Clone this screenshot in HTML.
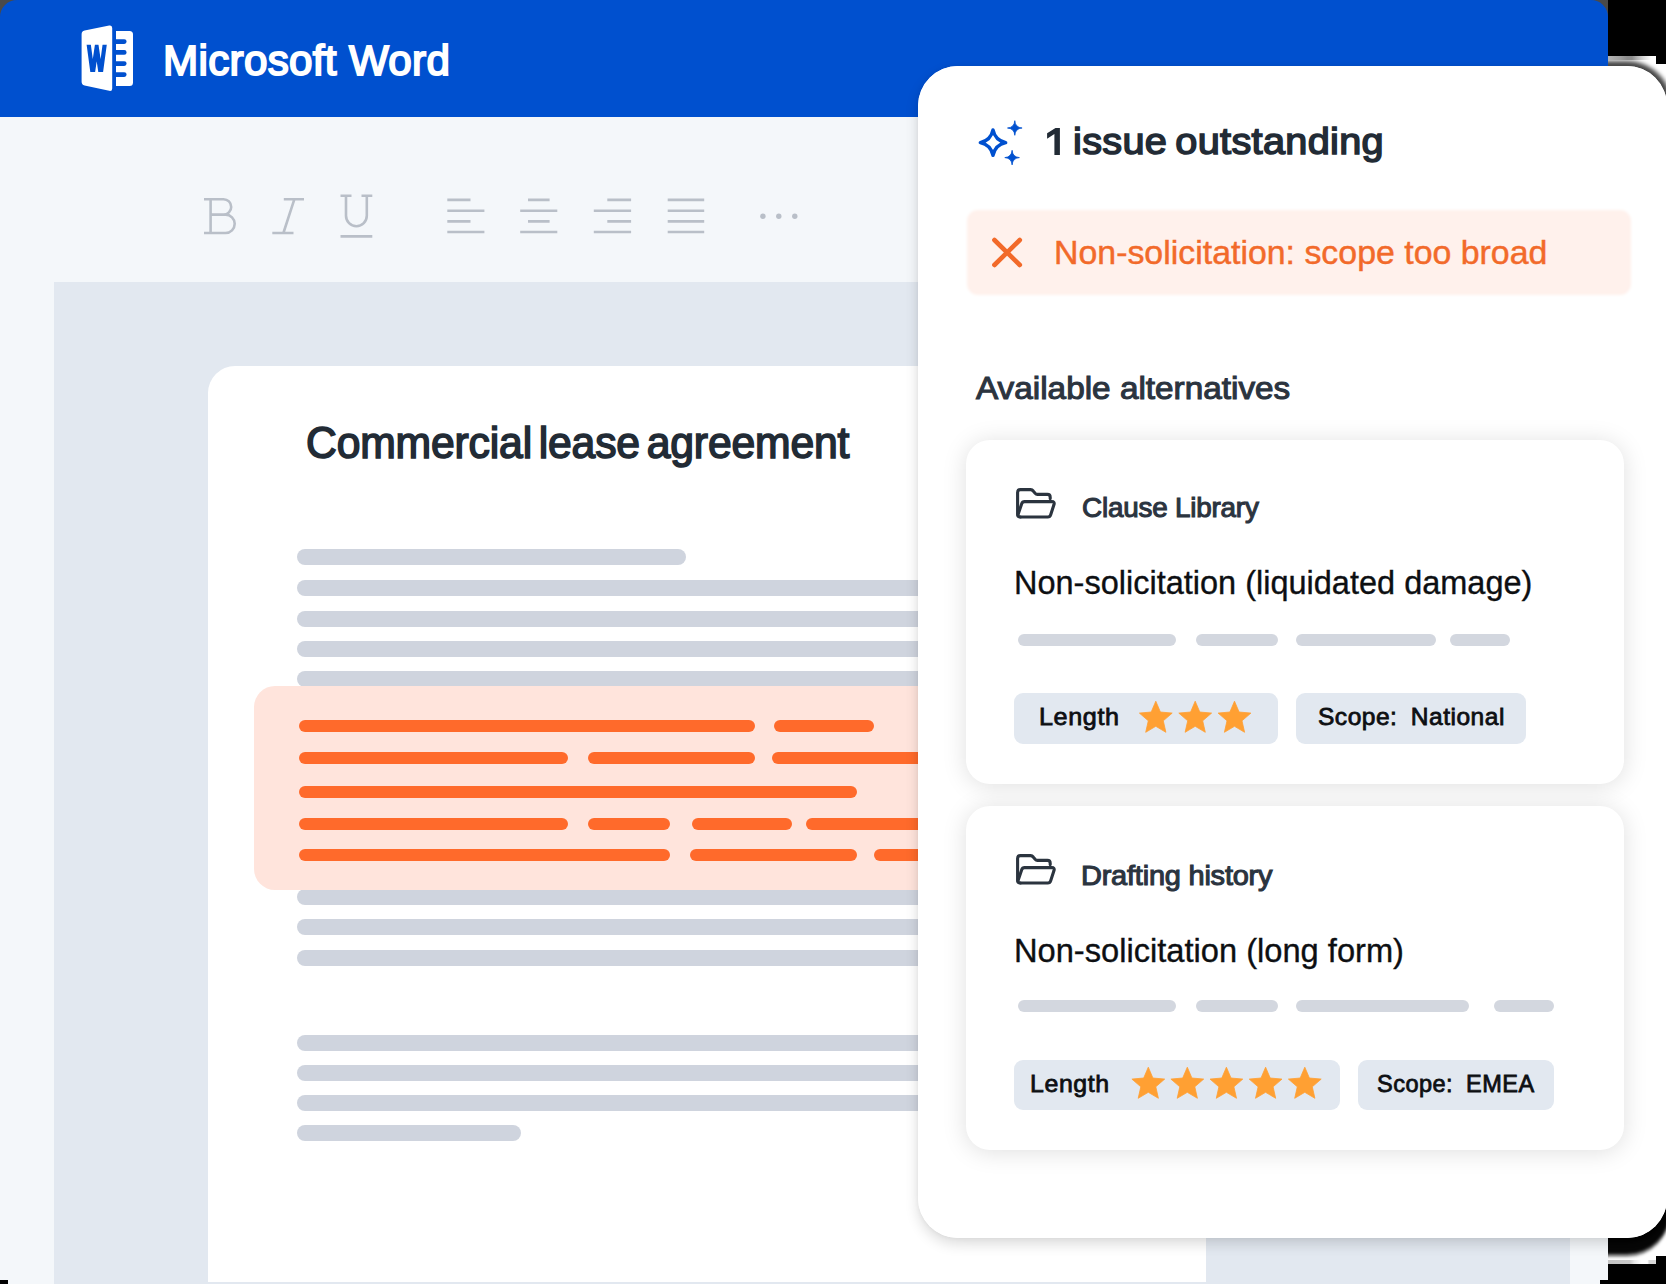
<!DOCTYPE html>
<html>
<head>
<meta charset="utf-8">
<title>Microsoft Word – clause review</title>
<style>
*{box-sizing:border-box;margin:0;padding:0}
html,body{width:1666px;height:1284px;overflow:hidden}
body{position:relative;background:#f4f7fa;font-family:"Liberation Sans",sans-serif;color:#1f2933}
.abs{position:absolute}
.t{position:absolute;white-space:nowrap;line-height:1;transform-origin:0 0}
/* window chrome */
#cornerL{left:0;top:0;width:24px;height:24px;background:#4a4a4a}
#cornerR{left:1584px;top:0;width:24px;height:24px;background:#4a4a4a}
#hdr{left:0;top:0;width:1608px;height:117px;background:#0050cf;border-radius:17px 17px 0 0}
#grayarea{left:54px;top:282px;width:1516px;height:1002px;background:#e2e8f0}
#doc{left:208px;top:366px;width:998px;height:916px;background:#fff;border-radius:27px 27px 0 0}
.gl{position:absolute;height:16px;border-radius:8px;background:#cfd4de;left:297px}
#hl{left:254px;top:686px;width:900px;height:204px;background:#ffe4dc;border-radius:21px 0 0 21px}
.ol{position:absolute;height:12px;border-radius:6px;background:#ff6a2b}
/* right strip (transparent-bg artefacts) */
#strip{left:1608px;top:0;width:58px;height:1284px;background:#fff;overflow:hidden}
/* panel */
#panel,#panelsh,#panelclone{left:918px;top:66px;width:749px;height:1172px;background:#fff;border-radius:40px}
#panelsh{box-shadow:0 6px 14px rgba(0,0,0,.14),0 0 5px rgba(0,0,0,.05)}
#panelclone{left:-690px;box-shadow:0 0 4px 5px rgba(0,0,0,.72),0 13px 3px 3px rgba(0,0,0,.96),0 16px 3px 3px rgba(0,0,0,.45)}
#strip i{position:absolute;display:block}
#alert{left:969px;top:212px;width:660px;height:81px;background:#fff1ec;border-radius:9px;box-shadow:0 0 3px 2px #fff1ec}
.card{position:absolute;left:966px;width:658px;height:344px;background:#fff;border-radius:24px;box-shadow:0 2px 24px rgba(0,0,0,.13)}
.pill{position:absolute;height:12px;border-radius:6px;background:#d3d7df}
.tag{position:absolute;height:51px;margin-top:-1px;border-radius:9px;background:#e2e8f0}
</style>
</head>
<body>
<!-- WINDOW -->
<div class="abs" id="cornerL"></div>
<div class="abs" id="cornerR"></div>
<div class="abs" id="hdr"></div>
<div class="abs" id="grayarea"></div>
<div class="abs" style="left:1570px;top:282px;width:38px;height:1002px;background:#f4f7fa"></div>
<div class="abs" id="doc"></div>

<!-- document content -->
<div class="t" id="doctitle" style="left:306.03px;top:420.85px;font-size:44px;color:#222b35;letter-spacing:-0.2px;word-spacing:-5px;transform:scaleX(0.9709);-webkit-text-stroke:1.6px #222b35">Commercial lease agreement</div>
<div class="gl" style="top:549px;width:389px"></div>
<div class="gl" style="top:580px;width:700px"></div>
<div class="gl" style="top:611px;width:700px"></div>
<div class="gl" style="top:641px;width:700px"></div>
<div class="gl" style="top:671px;width:700px"></div>
<div class="gl" style="top:889px;width:700px"></div>
<div class="gl" style="top:919px;width:700px"></div>
<div class="gl" style="top:950px;width:700px"></div>
<div class="gl" style="top:1035px;width:700px"></div>
<div class="gl" style="top:1065px;width:700px"></div>
<div class="gl" style="top:1095px;width:700px"></div>
<div class="gl" style="top:1125px;width:224px"></div>
<div class="abs" id="hl"></div>
<div class="ol" style="top:720px;left:299px;width:456px"></div>
<div class="ol" style="top:720px;left:774px;width:100px"></div>
<div class="ol" style="top:752px;left:299px;width:269px"></div>
<div class="ol" style="top:752px;left:588px;width:167px"></div>
<div class="ol" style="top:752px;left:772px;width:300px"></div>
<div class="ol" style="top:786px;left:299px;width:558px"></div>
<div class="ol" style="top:818px;left:299px;width:269px"></div>
<div class="ol" style="top:818px;left:588px;width:82px"></div>
<div class="ol" style="top:818px;left:692px;width:100px"></div>
<div class="ol" style="top:818px;left:806px;width:300px"></div>
<div class="ol" style="top:849px;left:299px;width:371px"></div>
<div class="ol" style="top:849px;left:690px;width:167px"></div>
<div class="ol" style="top:849px;left:874px;width:300px"></div>


<!-- header content -->
<svg class="abs" style="left:78px;top:22px" width="60" height="74" viewBox="78 22 60 74">
  <path d="M114 31 L129.5 31 Q133 31 133 34.5 L133 82.4 Q133 85.9 129.5 85.9 L114 85.9 Z" fill="#fff"/>
  <path d="M112 41.6 H124.2 M112 52.4 H124.2 M112 63.6 H124.2 M112 74.6 H124.2" stroke="#0050cf" stroke-width="4.8" stroke-linecap="round"/>
  <rect x="110" y="29" width="6" height="59" fill="#0050cf"/>
  <path d="M84.6 30.6 L109.2 25.6 Q112.2 25 112.2 28 L112.2 88.4 Q112.2 91.4 109.2 90.8 L84.6 85.4 Q81.6 84.8 81.6 81.8 L81.6 34.2 Q81.6 31.2 84.6 30.6 Z" fill="#fff"/>
  <svg x="80" y="44.8" width="32" height="27.2" viewBox="80 44.8 32 27.2"><path d="M88.5 43 L92.7 74 L96.7 47 L100.7 74 L104.9 43" fill="none" stroke="#0050cf" stroke-width="4.2" stroke-linejoin="miter" stroke-miterlimit="10"/></svg>
</svg>
<div class="t" id="apptitle" style="left:163.03px;top:38.65px;font-size:43px;color:#fff;letter-spacing:0.3px;word-spacing:0px;transform:scaleX(0.9817);-webkit-text-stroke:1.9px #fff">Microsoft Word</div>


<!-- toolbar -->
<svg class="abs" style="left:190px;top:185px" width="640" height="62" viewBox="190 185 640 62" fill="none" stroke="#b9bfc8" stroke-width="2.6">
  <!-- B -->
  <path d="M204 199.2 H223.5 A7.7 7.7 0 0 1 223.5 214.6 H211 M211 214.6 H225.5 A9.2 9.2 0 0 1 225.5 233 H204 M210.6 199.2 V233"/>
  <!-- I -->
  <path d="M283.8 199.2 H304 M272.3 233 H293.5 M294.4 199.2 L283.4 233"/>
  <!-- U -->
  <path d="M340.5 195.8 H351.5 M361.5 195.8 H372.3 M346 195.8 V215.8 A10.4 10.4 0 0 0 366.8 215.8 V195.8 M340.5 236.4 H372.3"/>
  <!-- align left -->
  <path d="M447.3 199.9 H470.5 M447.3 210.7 H484.4 M447.3 221.4 H470.5 M447.3 232 H484.4"/>
  <!-- center -->
  <path d="M528 199.9 H549.6 M520.2 210.7 H557.3 M528 221.4 H549.6 M520.2 232 H557.3"/>
  <!-- right -->
  <path d="M607.3 199.9 H631.1 M593.8 210.7 H631.1 M607.3 221.4 H631.1 M593.8 232 H631.1"/>
  <!-- justify -->
  <path d="M667.7 199.9 H704.2 M667.7 210.7 H704.2 M667.7 221.4 H704.2 M667.7 232 H704.2"/>
  <g fill="#b9bfc8" stroke="none"><circle cx="762.9" cy="216.2" r="2.7"/><circle cx="778.8" cy="216.2" r="2.7"/><circle cx="794.8" cy="216.2" r="2.7"/></g>
</svg>

<div class="abs" id="panelsh"></div>
<div class="abs" id="strip">
  <div class="abs" id="panelclone"></div>
  <i style="left:0;top:0;width:58px;height:56px;background:#000"></i>
  <i style="left:48px;top:56px;width:10px;height:8px;background:#000"></i>
  <i style="left:0;top:56px;width:48px;height:4px;background:linear-gradient(90deg,#b4b4b4 0,#a0a0a0 25%,#8c8c8c 40%,#8c8c8c 50%,#b0b0b0 60%,#dcdcdc 75%,#fff 90%)"></i>
  <i style="left:0;top:1260px;width:48px;height:4px;background:linear-gradient(90deg,#c4c4c4 0,#c8c8c8 45%,#e8e8e8 55%,#fff 70%,#fff 82%,#d8d8d8 86%,#d8d8d8 100%)"></i>
  <i style="left:0;top:1264px;width:58px;height:20px;background:#000"></i>
  <i style="left:48px;top:1256px;width:10px;height:8px;background:#000"></i>
</div>
<div class="abs" style="left:1600px;top:1280px;width:8px;height:4px;background:#000"></div>
<div class="abs" style="left:0;top:1280px;width:8px;height:4px;background:#000"></div>

<div class="abs" id="panel"></div>

<!-- panel content -->
<svg class="abs" style="left:970px;top:114px" width="60" height="58" viewBox="970 114 60 58">
  <path d="M993 129.9 Q995.159 140.441 1005.7 142.6 Q995.159 144.759 993 155.29999999999998 Q990.841 144.759 980.3 142.6 Q990.841 140.441 993 129.9Z" fill="none" stroke="#0050cf" stroke-width="3.4" stroke-linejoin="round"/>
  <path d="M1014.8 120.7 Q1015.3109999999999 127.489 1022.0999999999999 128 Q1015.3109999999999 128.511 1014.8 135.3 Q1014.289 128.511 1007.5 128 Q1014.289 127.489 1014.8 120.7Z" fill="#0050cf" stroke="#0050cf" stroke-width="0.8" stroke-linejoin="round"/>
  <path d="M1012.1 150.29999999999998 Q1012.611 157.089 1019.4 157.6 Q1012.611 158.111 1012.1 164.9 Q1011.589 158.111 1004.8000000000001 157.6 Q1011.589 157.089 1012.1 150.29999999999998Z" fill="#0050cf" stroke="#0050cf" stroke-width="0.8" stroke-linejoin="round"/>
</svg>
<svg class="abs" style="left:1044px;top:124px" width="20" height="34" viewBox="1044 124 20 34"><path d="M1059.9 128 V155.1 H1054.4 V134.1 L1047.1 138.7 V133.3 L1055.5 128 Z" fill="#222b35"/></svg>
<div class="t" id="h1" style="left:1072.55px;top:123.2px;font-size:37px;color:#222b35;letter-spacing:0.3px;word-spacing:-3px;transform:scaleX(1.0719);-webkit-text-stroke:1.5px #222b35">issue outstanding</div>
<div class="abs" id="alert"></div>
<svg class="abs" style="left:986px;top:232px" width="42" height="42" viewBox="986 232 42 42"><path d="M994.4 240 L1019.8 265 M1019.8 240 L994.4 265" stroke="#f26a2a" stroke-width="4.6" stroke-linecap="round"/></svg>
<div class="t" id="alerttxt" style="left:1053.96px;top:236.0px;font-size:33.2px;color:#f26a2a;letter-spacing:0px;word-spacing:0px;transform:scaleX(1.0208);-webkit-text-stroke:0.45px #f26a2a">Non-solicitation: scope too broad</div>
<div class="t" id="avail" style="left:976.06px;top:371.9px;font-size:32px;color:#2b343f;letter-spacing:0px;word-spacing:0px;transform:scaleX(1.0413);-webkit-text-stroke:1.1px #2b343f">Available alternatives</div>
<div class="card" style="top:440px"></div>
<svg class="abs" style="left:1010px;top:482px" width="54" height="44" viewBox="1010 482 54 44" fill="none" stroke="#2b343f" stroke-width="3.1" stroke-linejoin="round" stroke-linecap="round">
  <path d="M1050.2 498.6 V497.2 Q1050.2 494.4 1047.4 494.4 H1037.4 Q1036 494.4 1035.2 493.4 L1033.2 491 Q1032.2 489.6 1030.6 489.6 H1020.4 Q1017.6 489.6 1017.6 492.4 V514.2 Q1017.6 517 1020.4 517"/>
  <path d="M1020.4 517 H1047.8 Q1050 517 1050.6 514.9 L1054 504.6 Q1054.9 501.6 1051.8 501.6 H1024.6 Q1022.4 501.6 1021.7 503.7 L1017.9 515"/>
</svg>
<div class="t" id="clause" style="left:1081.60px;top:494.4px;font-size:28px;color:#2b343f;letter-spacing:-0.2px;word-spacing:0px;transform:scaleX(0.9939);-webkit-text-stroke:1.1px #2b343f">Clause Library</div>
<div class="t" id="name1" style="left:1014.03px;top:566.45px;font-size:33px;color:#0d0f12;letter-spacing:0px;word-spacing:0px;transform:scaleX(0.9847);-webkit-text-stroke:0.35px #0d0f12">Non-solicitation (liquidated damage)</div>
<div class="pill" style="left:1018px;top:634px;width:158px"></div>
<div class="pill" style="left:1196px;top:634px;width:82px"></div>
<div class="pill" style="left:1296px;top:634px;width:140px"></div>
<div class="pill" style="left:1450px;top:634px;width:60px"></div>
<div class="tag" style="left:1014px;top:694px;width:264px"></div>
<div class="t" id="len1" style="left:1038.56px;top:704.9px;font-size:24.3px;color:#0d0f12;letter-spacing:0.6px;word-spacing:0px;transform:scaleX(1.0355);-webkit-text-stroke:0.8px #0d0f12">Length</div>
<svg class="abs" style="left:1120px;top:694px" width="220" height="50" viewBox="1120 694 220 50" fill="#ffa033" stroke="#ffa033" stroke-width="0.8" stroke-linejoin="round"><polygon points="1155.8,701.2 1160.4,712.0 1172.2,713.1 1163.3,720.8 1165.9,732.3 1155.8,726.3 1145.7,732.3 1148.3,720.8 1139.4,713.1 1151.2,712.0"/><polygon points="1195.2,701.2 1199.8,712.0 1211.6,713.1 1202.7,720.8 1205.3,732.3 1195.2,726.3 1185.1,732.3 1187.7,720.8 1178.8,713.1 1190.6,712.0"/><polygon points="1234.5,701.2 1239.1,712.0 1250.9,713.1 1242.0,720.8 1244.6,732.3 1234.5,726.3 1224.4,732.3 1227.0,720.8 1218.1,713.1 1229.9,712.0"/></svg>
<div class="tag" style="left:1296px;top:694px;width:230px"></div>
<div class="t" id="scope1" style="left:1318.40px;top:704.9px;font-size:24.3px;color:#0d0f12;letter-spacing:0.5px;word-spacing:6px;transform:scaleX(1.0098);-webkit-text-stroke:0.8px #0d0f12">Scope: National</div>
<div class="card" style="top:806px"></div>
<svg class="abs" style="left:1010px;top:848px" width="54" height="44" viewBox="1010 848 54 44" fill="none" stroke="#2b343f" stroke-width="3.1" stroke-linejoin="round" stroke-linecap="round">
  <path d="M1050.2 864.6 V863.2 Q1050.2 860.4 1047.4 860.4 H1037.4 Q1036 860.4 1035.2 859.4 L1033.2 857 Q1032.2 855.6 1030.6 855.6 H1020.4 Q1017.6 855.6 1017.6 858.4 V880.2 Q1017.6 883 1020.4 883"/>
  <path d="M1020.4 883 H1047.8 Q1050 883 1050.6 880.9 L1054 870.6 Q1054.9 867.6 1051.8 867.6 H1024.6 Q1022.4 867.6 1021.7 869.7 L1017.9 881"/>
</svg>
<div class="t" id="draft" style="left:1080.56px;top:862.2px;font-size:28px;color:#2b343f;letter-spacing:-0.2px;word-spacing:0px;transform:scaleX(1.0335);-webkit-text-stroke:1.1px #2b343f">Drafting history</div>
<div class="t" id="name2" style="left:1014.02px;top:934.25px;font-size:33px;color:#0d0f12;letter-spacing:0px;word-spacing:0px;transform:scaleX(0.9890);-webkit-text-stroke:0.35px #0d0f12">Non-solicitation (long form)</div>
<div class="pill" style="left:1018px;top:1000px;width:158px"></div>
<div class="pill" style="left:1196px;top:1000px;width:82px"></div>
<div class="pill" style="left:1296px;top:1000px;width:173px"></div>
<div class="pill" style="left:1494px;top:1000px;width:60px"></div>
<div class="tag" style="margin-top:0;height:50px;left:1014px;top:1060px;width:326px"></div>
<div class="t" id="len2" style="left:1030.19px;top:1072.2px;font-size:24.3px;color:#0d0f12;letter-spacing:0.6px;word-spacing:0px;transform:scaleX(1.0234);-webkit-text-stroke:0.8px #0d0f12">Length</div>
<svg class="abs" style="left:1120px;top:1060px" width="220" height="50" viewBox="1120 1060 220 50" fill="#ffa033" stroke="#ffa033" stroke-width="0.8" stroke-linejoin="round"><polygon points="1148.3,1067.2 1152.9,1078.0 1164.7,1079.1 1155.8,1086.8 1158.4,1098.3 1148.3,1092.3 1138.2,1098.3 1140.8,1086.8 1131.9,1079.1 1143.7,1078.0"/><polygon points="1187.3,1067.2 1191.9,1078.0 1203.7,1079.1 1194.8,1086.8 1197.4,1098.3 1187.3,1092.3 1177.2,1098.3 1179.8,1086.8 1170.9,1079.1 1182.7,1078.0"/><polygon points="1226.4,1067.2 1231.0,1078.0 1242.8,1079.1 1233.9,1086.8 1236.5,1098.3 1226.4,1092.3 1216.3,1098.3 1218.9,1086.8 1210.0,1079.1 1221.8,1078.0"/><polygon points="1265.6,1067.2 1270.2,1078.0 1282.0,1079.1 1273.1,1086.8 1275.7,1098.3 1265.6,1092.3 1255.5,1098.3 1258.1,1086.8 1249.2,1079.1 1261.0,1078.0"/><polygon points="1304.8,1067.2 1309.4,1078.0 1321.2,1079.1 1312.3,1086.8 1314.9,1098.3 1304.8,1092.3 1294.7,1098.3 1297.3,1086.8 1288.4,1079.1 1300.2,1078.0"/></svg>
<div class="tag" style="margin-top:0;height:50px;left:1358px;top:1060px;width:196px"></div>
<div class="t" id="scope2" style="left:1377.00px;top:1072.2px;font-size:24.3px;color:#0d0f12;letter-spacing:0.5px;word-spacing:6px;transform:scaleX(0.9681);-webkit-text-stroke:0.8px #0d0f12">Scope: EMEA</div>

</body>
</html>
